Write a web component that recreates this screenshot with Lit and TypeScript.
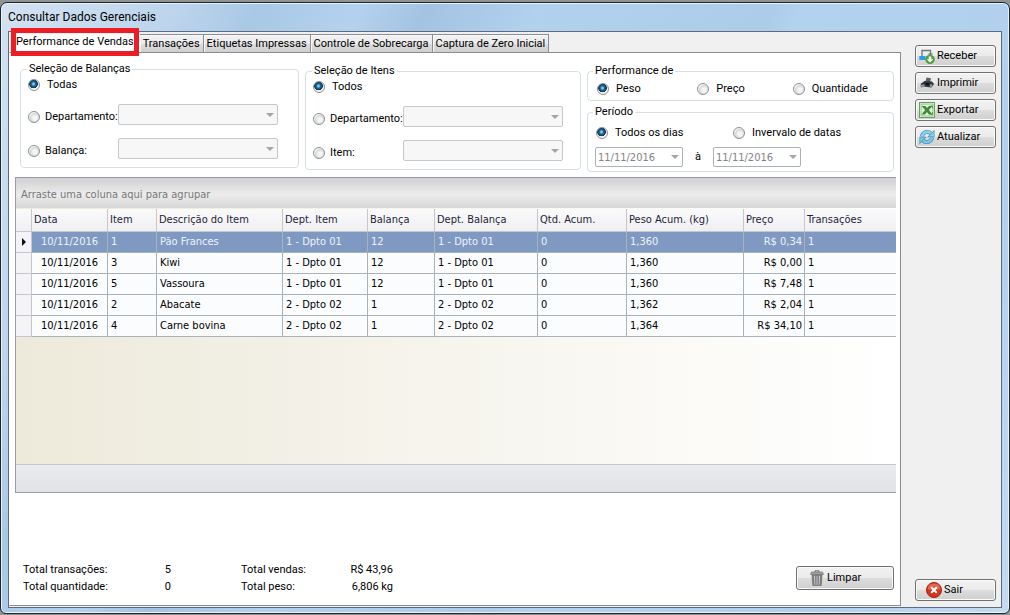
import { LitElement, html, css, svg, TemplateResult } from "lit";
import { customElement, property, state } from "lit/decorators.js";

interface Row {
  data: string;
  item: string;
  descricao: string;
  deptItem: string;
  balanca: string;
  deptBalanca: string;
  qtd: string;
  peso: string;
  preco: string;
  transacoes: string;
}

const ROWS: Row[] = [
  { data: "10/11/2016", item: "1", descricao: "Pão Frances", deptItem: "1 - Dpto 01", balanca: "12", deptBalanca: "1 - Dpto 01", qtd: "0", peso: "1,360", preco: "R$ 0,34", transacoes: "1" },
  { data: "10/11/2016", item: "3", descricao: "Kiwi", deptItem: "1 - Dpto 01", balanca: "12", deptBalanca: "1 - Dpto 01", qtd: "0", peso: "1,360", preco: "R$ 0,00", transacoes: "1" },
  { data: "10/11/2016", item: "5", descricao: "Vassoura", deptItem: "1 - Dpto 01", balanca: "12", deptBalanca: "1 - Dpto 01", qtd: "0", peso: "1,360", preco: "R$ 7,48", transacoes: "1" },
  { data: "10/11/2016", item: "2", descricao: "Abacate", deptItem: "2 - Dpto 02", balanca: "1", deptBalanca: "2 - Dpto 02", qtd: "0", peso: "1,362", preco: "R$ 2,04", transacoes: "1" },
  { data: "10/11/2016", item: "4", descricao: "Carne bovina", deptItem: "2 - Dpto 02", balanca: "1", deptBalanca: "2 - Dpto 02", qtd: "0", peso: "1,364", preco: "R$ 34,10", transacoes: "1" },
];

const TABS = [
  "Performance de Vendas",
  "Transações",
  "Etiquetas Impressas",
  "Controle de Sobrecarga",
  "Captura de Zero Inicial",
];

const ICONS: Record<string, TemplateResult> = {
  receber: svg`
    <path d="M3 9V2.500h8.500V7" fill="none" stroke="#70767d" stroke-width="1.300"/>
    <path d="M9.500 6h4" stroke="#70767d" stroke-width="1.300"/>
    <rect x="0.300" y="8" width="6.200" height="4" fill="#2f9bf0"/>
    <circle cx="11" cy="11.300" r="4.400" fill="#4aa733" stroke="#2f8420" stroke-width=".5"/>
    <path d="M11 14.500 7.700 11.200h2V8.500h2.600v2.700h2z" fill="#fff"/>`,
  imprimir: svg`
    <path d="M7.500 2.500l4.500.8-.8 3.700-4.700-.5z" fill="#5b636b"/>
    <path d="M1.500 9l4-3 7.500.5 2 2.500-2.500 3.500-9-1z" fill="#30353b"/>
    <path d="M1 10.500l4-1.500 1 2.800-4 1z" fill="#8b949c"/>
    <path d="M11.500 9l2 .8-1 2.200-1.800-.6z" fill="#9aa2aa"/>
    <path d="M6.500 8h3.500v2H6.500z" fill="#111417"/>`,
  exportar: svg`
    <rect x="0.500" y="0.500" width="15" height="15" fill="#fff" stroke="#63a35b"/>
    <rect x="2" y="2" width="12" height="12" fill="#e2f1dd" stroke="#8cc083"/>
    <path d="M2.500 4h3.900L8 6l2-2h3.500L9.800 8l3.700 4.400H9.800L8 10l-2 2.400H2.500L6.200 8z" fill="#3f8a35"/>
    <path d="M11.500 4h2v2.500M11.500 12.400h2V10" fill="none" stroke="#3f8a35" stroke-width=".8"/>`,
  atualizar: svg`
    <path d="M3 7.500A5.300 5.300 0 0 1 12 4.500" fill="none" stroke="#3c93bb" stroke-width="4"/>
    <path d="M15.500.8v7.400H8.200z" fill="#3c93bb"/>
    <path d="M13 8.500A5.300 5.300 0 0 1 4 11.500" fill="none" stroke="#3c93bb" stroke-width="4"/>
    <path d="M.5 15.200V7.800h7.300z" fill="#3c93bb"/>
    <path d="M3 7.500A5.300 5.300 0 0 1 12 4.500" fill="none" stroke="#8fd0ea" stroke-width="2.600"/>
    <path d="M14.800 2.500v5H9.900z" fill="#8fd0ea"/>
    <path d="M13 8.500A5.300 5.300 0 0 1 4 11.500" fill="none" stroke="#7cc4e3" stroke-width="2.600"/>
    <path d="M1.200 13.500v-5h4.900z" fill="#7cc4e3"/>`,
  limpar: svg`
    <path d="M6 2V.8h4V2" fill="none" stroke="#6d6d6d"/>
    <path d="M2.500 2h11l1 2.500h-13z" fill="#a2a2a2" stroke="#707070" stroke-width=".7"/>
    <path d="M3 5h10l-.8 10.500H3.800z" fill="#8e8e8e" stroke="#6b6b6b" stroke-width=".7"/>
    <path d="M5.500 6l.4 8.500M8 6v8.500M10.500 6l-.4 8.500" stroke="#d2d2d2"/>
    <path d="M4.400 6l.4 8.500M6.900 6v8.500M9.200 6v8.500M11.700 6l-.4 8.500" stroke="#6a6a6a" stroke-width=".6"/>`,
  sair: svg`
    <circle cx="8" cy="8" r="7.500" fill="#d8321d" stroke="#a52312"/>
    <path d="M1.500 7a6.600 6.600 0 0 1 13 0c-3 1.500-10 1.500-13 0z" fill="#ef7a62" opacity=".7"/>
    <path d="M5.700 5.700l4.600 4.600M10.300 5.700l-4.600 4.600" stroke="#fff" stroke-width="2" stroke-linecap="round"/>`,
};

@customElement("icon-button")
export class IconButton extends LitElement {
  @property() icon = "";
  @property() label = "";

  static styles = css`
    :host { display: block; }
    .btn {
      box-sizing: border-box;
      display: flex;
      align-items: center;
      gap: 2px;
      width: 100%;
      height: 22px;
      margin: 0;
      padding: 0 3px;
      border: 1px solid #707070;
      border-radius: 3px;
      background: linear-gradient(#f2f2f2 0%, #ebebeb 48%, #dddddd 50%, #cfcfcf 100%);
      box-shadow: inset 0 0 0 1px #fbfbfb;
      color: #000;
      font: 11px/14px "Roboto", "Liberation Sans", sans-serif;
      white-space: nowrap;
    }
    :host([wide]) .btn { height: 24px; padding: 0 12px; }
    :host([roomy]) .btn { padding: 0 10px; }
    .icon { width: 16px; height: 16px; flex: none; }
  `;

  render() {
    return html`<button class="btn" type="button">
      <svg class="icon" viewBox="0 0 16 16" aria-hidden="true">${ICONS[this.icon]}</svg>
      <span>${this.label}</span>
    </button>`;
  }
}

@customElement("sales-grid")
export class SalesGrid extends LitElement {
  @state() private selected = 0;

  static styles = css`
    :host {
      display: flex;
      flex-direction: column;
      border: 1px solid #9a9aa8;
      border-right: 0;
      background: linear-gradient(90deg, #edeadb, #ffffff);
      font: 11px/14px "DejaVu Sans Condensed", "Noto Sans", sans-serif;
      color: #000;
    }
    .group {
      box-sizing: border-box;
      height: 30px;
      padding: 10px 5px 0;
      background: linear-gradient(#d0d0d0, #ececec 55%, #d6d6d6);
      color: #77777a;
    }
    .table {
      width: 100%;
      margin-top: 1px;
      border-collapse: separate;
      border-spacing: 0;
      table-layout: fixed;
    }
    .c-mark { width: 16px; }
    .c-data { width: 76px; }
    .c-item { width: 49px; }
    .c-desc { width: 126px; }
    .c-dept { width: 85px; }
    .c-bal { width: 67px; }
    .c-dbal { width: 103px; }
    .c-qtd { width: 89px; }
    .c-peso { width: 117px; }
    .c-preco { width: 61px; }
    th, td {
      box-sizing: border-box;
      height: 21px;
      padding: 0 3px;
      border-right: 1px solid #a9b2b9;
      border-bottom: 1px solid #a9b2b9;
      background: #fafcfe;
      text-align: left;
      font-weight: normal;
      white-space: nowrap;
      overflow: hidden;
    }
    th {
      height: 23px;
      padding: 0 2px;
      border-color: #c6c6cf;
      background: linear-gradient(#fafafb, #f0f0f3);
      color: #1f1f3a;
    }
    th:last-child, td:last-child { border-right: 0; }
    .mark {
      padding: 0;
      border-color: #c6c6cf;
      background: #f4f4f7;
    }
    .arrow { display: block; margin: 0 auto; }
    .center { text-align: center; }
    .right { text-align: right; padding-right: 2px; }
    .current td { background: #8099c3; color: #eef2f8; }
    .current .mark { background: #f4f4f7; }
    .foot {
      box-sizing: border-box;
      height: 28px;
      margin-top: auto;
      border-top: 1px solid #c6c6cf;
      background: linear-gradient(#eaebef, #e1e2e6);
    }
  `;

  render() {
    return html`
      <div class="group">Arraste uma coluna aqui para agrupar</div>
      <table class="table">
        <colgroup>
          <col class="c-mark" /><col class="c-data" /><col class="c-item" /><col class="c-desc" />
          <col class="c-dept" /><col class="c-bal" /><col class="c-dbal" /><col class="c-qtd" />
          <col class="c-peso" /><col class="c-preco" /><col />
        </colgroup>
        <thead>
          <tr>
            <th></th><th>Data</th><th>Item</th><th>Descrição do Item</th><th>Dept. Item</th>
            <th>Balança</th><th>Dept. Balança</th><th>Qtd. Acum.</th><th>Peso Acum. (kg)</th>
            <th>Preço</th><th>Transações</th>
          </tr>
        </thead>
        <tbody>
          ${ROWS.map(
            (r, i) => html`<tr class=${i === this.selected ? "current" : ""} @click=${() => (this.selected = i)}>
              <td class="mark">
                ${i === this.selected
                  ? html`<svg class="arrow" width="4" height="8" viewBox="0 0 4 8"><path d="M0 0l4 4-4 4z" fill="#111" /></svg>`
                  : ""}
              </td>
              <td class="center">${r.data}</td>
              <td>${r.item}</td>
              <td>${r.descricao}</td>
              <td>${r.deptItem}</td>
              <td>${r.balanca}</td>
              <td>${r.deptBalanca}</td>
              <td>${r.qtd}</td>
              <td>${r.peso}</td>
              <td class="right">${r.preco}</td>
              <td>${r.transacoes}</td>
            </tr>`
          )}
        </tbody>
      </table>
      <div class="foot"></div>
    `;
  }
}

@customElement("app-root")
export class AppRoot extends LitElement {
  @state() private tab = 0;

  static styles = css`
    :host {
      box-sizing: border-box;
      display: flex;
      min-height: 100vh;
      padding: 2px 0 1px;
      background: #8f9392;
      color: #000;
      font: 11px/14px "Roboto", "Liberation Sans", sans-serif;
    }
    .window {
      box-sizing: border-box;
      flex: 1;
      min-width: 0;
      display: flex;
      flex-direction: column;
      padding: 0 7px 5px;
      border: 1px solid #20252c;
      border-radius: 7px 7px 6px 6px;
      background:
        linear-gradient(115deg, #d3e2f2 0%, #bcd4ec 14%, #a9c8e6 20%, #b4d2ef 28%, #a4c3e2 33%, #b2d1ef 42%, #acccea 60%, #b3d2f0 62%, #b0d0ee 85%, #c5daf0 100%);
      box-shadow: inset 0 0 0 1px #e8f2fb;
    }
    .title {
      margin: 0;
      height: 28px;
      font: 12px/28px "Roboto", "Liberation Sans", sans-serif;
    }
    .client {
      flex: 1;
      display: flex;
      border: 1px solid #5b6b80;
      background: #f0f0f0;
    }
    .main {
      flex: 1;
      min-width: 0;
      display: flex;
      flex-direction: column;
      padding: 2px 0 1px;
    }
    .tabs { display: flex; align-items: flex-end; padding-left: 4px; height: 18px; }
    .tab {
      box-sizing: border-box;
      height: 18px;
      margin: 0;
      padding: 0 3px;
      border: 1px solid #8b8b96;
      border-left: 0;
      border-bottom: 0;
      background: linear-gradient(#f3f3f3, #ebebeb 50%, #dddddd 52%, #cfcfcf);
      box-shadow: inset 1px 1px 0 #fafafa;
      color: #000;
      font: 11px/14px "Roboto", "Liberation Sans", sans-serif;
      white-space: nowrap;
    }
    .tab.active {
      position: relative;
      padding: 0 5px 3px 3px;
      border-color: #fff;
      background: #fff;
    }
    .tab.active::after {
      content: "";
      position: absolute;
      inset: -7px 0 -4px -2px;
      border: 5px solid #ee1c25;
    }
    .panel {
      flex: 1;
      display: flex;
      flex-direction: column;
      padding: 9px 4px 15px 5px;
      border: 1px solid #8b8b96;
      border-left-color: #fff;
      background: #fff;
    }
    .filters {
      display: grid;
      grid-template-columns: 279fr 276fr 307fr;
      gap: 6px;
      padding: 0 2px 0 5px;
      align-items: start;
    }
    .box {
      min-width: 0;
      margin: 0;
      padding: 0 5px;
      border: 1px solid #d5dfe5;
      border-radius: 4px;
    }
    .box legend { padding: 0 2px; height: 14px; }
    .shift { margin-top: 2px; }
    .line { display: flex; align-items: center; height: 34px; }
    .line.first { height: 18px; margin-bottom: 6px; }
    .tall { height: 104px; padding: 0 7px; }
    .tall legend { margin-left: -1px; }
    .opt { display: flex; align-items: center; gap: 7px; white-space: nowrap; }
    .line .opt.lead { flex: 0 0 90px; min-width: 0; gap: 5px; }
    .radio {
      appearance: none;
      box-sizing: border-box;
      flex: none;
      width: 12px;
      height: 12px;
      margin: 0;
      border: 1px solid #8e8f8f;
      border-radius: 50%;
      background: radial-gradient(circle at 60% 60%, #f4f4f4 0 25%, #d2d5d9 55%, #f6f6f6 62%);
    }
    .radio:checked {
      background: radial-gradient(circle at 45% 40%, #7fd4f5 0 8%, #1b6e9e 25%, #12334e 50%, #f2f4f5 56%);
    }
    .combo { position: relative; min-width: 0; display: flex; }
    .line .combo { flex: 0 1 160px; margin-bottom: 5px; }
    .combo::after {
      content: "";
      position: absolute;
      right: 4px;
      top: 50%;
      margin-top: -2px;
      border: 4px solid transparent;
      border-top-color: #a5a5a5;
      border-bottom: 0;
      pointer-events: none;
    }
    .select {
      appearance: none;
      box-sizing: border-box;
      width: 100%;
      height: 21px;
      margin: 0;
      border: 1px solid #adb2b5;
      border-radius: 2px;
      background: #f4f4f4;
    }
    .side-boxes { display: flex; flex-direction: column; gap: 4px; }
    .short { height: 35px; }
    .period { height: 65px; }
    .choices { display: grid; grid-template-columns: 101fr 96fr 92fr; height: 22px; align-items: center; padding: 0 4px; }
    .choices.two { grid-template-columns: 137fr 152fr; height: 28px; padding: 0 3px; }
    .dates { display: flex; align-items: center; gap: 12px; padding-left: 2px; }
    .dates .combo { flex: 0 0 88px; }
    .date {
      appearance: none;
      box-sizing: border-box;
      width: 100%;
      height: 20px;
      margin: 0;
      padding: 0 2px;
      border: 1px solid #adb2b5;
      border-radius: 2px;
      background: #fff;
      color: #838383;
      font: 11px/14px "DejaVu Sans Condensed", "Noto Sans", sans-serif;
    }
    .grid { height: 314px; margin-top: 5px; }
    .bottom {
      display: flex;
      justify-content: space-between;
      align-items: flex-end;
      margin-top: auto;
      padding: 0 2px 0 8px;
    }
    .totals {
      display: grid;
      grid-template-columns: 134px 14px 70px 84px 68px;
      row-gap: 3px;
      line-height: 14px;
      margin: 0 0 -4px;
    }
    .totals dt, .totals dd { margin: 0; white-space: nowrap; }
    .totals dd { text-align: right; }
    .totals .second { grid-column: 4; }
    .clear { width: 98px; }
    .side {
      flex: none;
      width: 81px;
      display: flex;
      flex-direction: column;
      gap: 5px;
      padding: 13px 5px 6px 14px;
    }
    .exit { margin-top: auto; }
  `;

  private selection(name: string, title: string, all: string, second: string, shift = false) {
    return html`<fieldset class="box tall ${shift ? "shift" : ""}">
      <legend>${title}</legend>
      <div class="line first">
        <label class="opt"><input class="radio" type="radio" name=${name} checked />${all}</label>
      </div>
      ${["Departamento:", second].map(
        (text) => html`<div class="line">
          <label class="opt lead"><input class="radio" type="radio" name=${name} />${text}</label>
          <span class="combo"><select class="select" aria-label=${text} disabled></select></span>
        </div>`
      )}
    </fieldset>`;
  }

  render() {
    return html`
      <div class="window">
        <h1 class="title">Consultar Dados Gerenciais</h1>
        <div class="client">
          <div class="main">
            <div class="tabs" role="tablist">
              ${TABS.map(
                (t, i) => html`<button
                  class="tab ${i === this.tab ? "active" : ""}"
                  type="button"
                  role="tab"
                  aria-selected=${i === this.tab}
                  @click=${() => (this.tab = i)}
                >${t}</button>`
              )}
            </div>
            <div class="panel">
              <div class="filters">
                ${this.selection("balancas", "Seleção de Balanças", "Todas", "Balança:")}
                ${this.selection("itens", "Seleção de Itens", "Todos", "Item:", true)}
                <div class="side-boxes shift">
                  <fieldset class="box short">
                    <legend>Performance de</legend>
                    <div class="choices">
                      <label class="opt"><input class="radio" type="radio" name="perf" checked />Peso</label>
                      <label class="opt"><input class="radio" type="radio" name="perf" />Preço</label>
                      <label class="opt"><input class="radio" type="radio" name="perf" />Quantidade</label>
                    </div>
                  </fieldset>
                  <fieldset class="box period">
                    <legend>Período</legend>
                    <div class="choices two">
                      <label class="opt"><input class="radio" type="radio" name="periodo" checked />Todos os dias</label>
                      <label class="opt"><input class="radio" type="radio" name="periodo" />Invervalo de datas</label>
                    </div>
                    <div class="dates">
                      <span class="combo"><input class="date" aria-label="Data inicial" value="11/11/2016" disabled /></span>
                      <span>à</span>
                      <span class="combo"><input class="date" aria-label="Data final" value="11/11/2016" disabled /></span>
                    </div>
                  </fieldset>
                </div>
              </div>
              <sales-grid class="grid"></sales-grid>
              <div class="bottom">
                <dl class="totals">
                  <dt>Total transações:</dt><dd>5</dd>
                  <dt class="second">Total vendas:</dt><dd>R$ 43,96</dd>
                  <dt>Total quantidade:</dt><dd>0</dd>
                  <dt class="second">Total peso:</dt><dd>6,806 kg</dd>
                </dl>
                <icon-button class="clear" wide icon="limpar" label="Limpar"></icon-button>
              </div>
            </div>
          </div>
          <div class="side">
            <icon-button icon="receber" label="Receber"></icon-button>
            <icon-button icon="imprimir" label="Imprimir"></icon-button>
            <icon-button icon="exportar" label="Exportar"></icon-button>
            <icon-button icon="atualizar" label="Atualizar"></icon-button>
            <icon-button class="exit" roomy icon="sair" label="Sair"></icon-button>
          </div>
        </div>
      </div>
    `;
  }
}
